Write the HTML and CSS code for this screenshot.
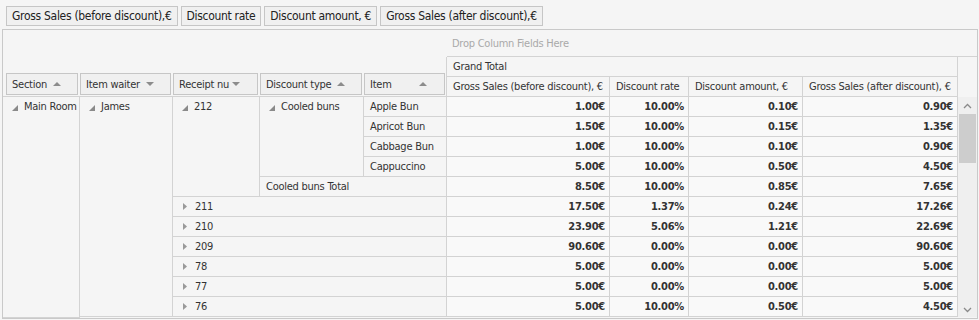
FILE: index.html
```html
<!DOCTYPE html>
<html>
<head>
<meta charset="utf-8">
<link rel="stylesheet" href="styles.css">
</head>
<body>
<div class="toolbar">
  <div class="tbtn">Gross Sales (before discount),€</div>
  <div class="tbtn">Discount rate</div>
  <div class="tbtn">Discount amount, €</div>
  <div class="tbtn">Gross Sales (after discount),€</div>
</div>
<div class="pivot">
  <div class="grid">
    <div class="fh first"><div class="fbtn"><span class="ft">Section</span><i class="up"></i></div></div>
    <div class="fh"><div class="fbtn"><span class="ft">Item waiter</span><i class="down"></i></div></div>
    <div class="fh"><div class="fbtn"><span class="ft">Receipt nu</span><i class="down tight"></i></div></div>
    <div class="fh"><div class="fbtn"><span class="ft">Discount type</span><i class="up"></i></div></div>
    <div class="fh"><div class="fbtn far"><span class="ft">Item</span><i class="up"></i></div></div>
    <div class="drop">Drop Column Fields Here</div>

    <div class="gt">Grand Total</div>
    <div class="gtx"></div>

    <div class="ch lead">Gross Sales (before discount), €</div>
    <div class="ch">Discount rate</div>
    <div class="ch">Discount amount, €</div>
    <div class="ch">Gross Sales (after discount), €</div>
    <div class="chx"></div>

    <!-- row 1 -->
    <div class="rh rs12"><span class="tg"><svg width="6" height="6" viewBox="0 0 6 6"><polygon points="6,0 6,6 0,6" fill="#8a8a8a"/></svg></span>Main Room</div>
    <div class="rh rs11"><span class="tg"><svg width="6" height="6" viewBox="0 0 6 6"><polygon points="6,0 6,6 0,6" fill="#8a8a8a"/></svg></span>James</div>
    <div class="rh rs5"><span class="tg"><svg width="6" height="6" viewBox="0 0 6 6"><polygon points="6,0 6,6 0,6" fill="#8a8a8a"/></svg></span>212</div>
    <div class="rh rs4"><span class="tg"><svg width="6" height="6" viewBox="0 0 6 6"><polygon points="6,0 6,6 0,6" fill="#8a8a8a"/></svg></span>Cooled buns</div>
    <div class="rh">Apple Bun</div>
    <div class="v">1.00€</div><div class="v">10.00%</div><div class="v">0.10€</div><div class="v">0.90€</div>
    <div class="sb">
      <div class="sb-btn"><svg width="9" height="6" viewBox="0 0 9 6"><polyline points="1,5 4.5,1.5 8,5" fill="none" stroke="#8a8a8a" stroke-width="1.3"/></svg></div>
      <div class="sb-thumb"></div>
      <div class="sb-track"></div>
      <div class="sb-btn bottom"><svg width="9" height="6" viewBox="0 0 9 6"><polyline points="1,1 4.5,4.5 8,1" fill="none" stroke="#8a8a8a" stroke-width="1.3"/></svg></div>
    </div>

    <!-- row 2 -->
    <div class="rh">Apricot Bun</div>
    <div class="v">1.50€</div><div class="v">10.00%</div><div class="v">0.15€</div><div class="v">1.35€</div>
    <!-- row 3 -->
    <div class="rh">Cabbage Bun</div>
    <div class="v">1.00€</div><div class="v">10.00%</div><div class="v">0.10€</div><div class="v">0.90€</div>
    <!-- row 4 -->
    <div class="rh">Cappuccino</div>
    <div class="v">5.00€</div><div class="v">10.00%</div><div class="v">0.50€</div><div class="v">4.50€</div>
    <!-- row 5 -->
    <div class="rh cs2">Cooled buns Total</div>
    <div class="v">8.50€</div><div class="v">10.00%</div><div class="v">0.85€</div><div class="v">7.65€</div>
    <!-- receipts -->
    <div class="rh cs3"><span class="tg col"><svg width="4" height="7" viewBox="0 0 4 7"><polygon points="0,0 4,3.5 0,7" fill="#9a9a9a"/></svg></span>211</div>
    <div class="v">17.50€</div><div class="v">1.37%</div><div class="v">0.24€</div><div class="v">17.26€</div>
    <div class="rh cs3"><span class="tg col"><svg width="4" height="7" viewBox="0 0 4 7"><polygon points="0,0 4,3.5 0,7" fill="#9a9a9a"/></svg></span>210</div>
    <div class="v">23.90€</div><div class="v">5.06%</div><div class="v">1.21€</div><div class="v">22.69€</div>
    <div class="rh cs3"><span class="tg col"><svg width="4" height="7" viewBox="0 0 4 7"><polygon points="0,0 4,3.5 0,7" fill="#9a9a9a"/></svg></span>209</div>
    <div class="v">90.60€</div><div class="v">0.00%</div><div class="v">0.00€</div><div class="v">90.60€</div>
    <div class="rh cs3"><span class="tg col"><svg width="4" height="7" viewBox="0 0 4 7"><polygon points="0,0 4,3.5 0,7" fill="#9a9a9a"/></svg></span>78</div>
    <div class="v">5.00€</div><div class="v">0.00%</div><div class="v">0.00€</div><div class="v">5.00€</div>
    <div class="rh cs3"><span class="tg col"><svg width="4" height="7" viewBox="0 0 4 7"><polygon points="0,0 4,3.5 0,7" fill="#9a9a9a"/></svg></span>77</div>
    <div class="v">5.00€</div><div class="v">0.00%</div><div class="v">0.00€</div><div class="v">5.00€</div>
    <div class="rh cs3"><span class="tg col"><svg width="4" height="7" viewBox="0 0 4 7"><polygon points="0,0 4,3.5 0,7" fill="#9a9a9a"/></svg></span>76</div>
    <div class="v">5.00€</div><div class="v">10.00%</div><div class="v">0.50€</div><div class="v">4.50€</div>
  </div>
</div>
</body>
</html>
```

FILE: styles.css
```css
* { box-sizing: border-box; }

body {
  margin: 0;
  height: 320px;
  overflow: hidden;
  background: #f5f5f5;
  font-family: "DejaVu Sans Condensed", "DejaVu Sans", sans-serif;
  font-size: 11px;
  letter-spacing: -0.25px;
  color: #333;
}

.toolbar {
  display: flex;
  gap: 3px;
  height: 29px;
  padding: 6px 0 3px 6px;
}

.tbtn {
  height: 20px;
  border: 1px solid #c6c6c6;
  background: #f0f0f0;
  padding: 0 5px;
  line-height: 18px;
  font-size: 12px;
  letter-spacing: -0.3px;
  white-space: nowrap;
  color: #222;
}

.pivot {
  margin-left: 2px;
  width: 976px;
  height: 290px;
  border: 1px solid #c9c9c9;
  background: #f5f5f5;
  overflow: hidden;
}

.grid {
  display: grid;
  grid-template-columns: 77px 93px 87px 104px 83px 163px 79px 114px 155px 19px;
  grid-template-rows: 27px 20px 20px repeat(11, 20px) 1px;
}

/* field header buttons */
.fh {
  grid-row: span 3;
  display: flex;
  align-items: flex-end;
  padding: 0 2px 1px 0;
  border-bottom: 1px solid #d3d3d3;
}
.fh.first { padding-left: 3px; }

.fbtn {
  flex: 1;
  min-width: 0;
  height: 22px;
  border: 1px solid #c6c6c6;
  background: #f0f0f0;
  display: flex;
  align-items: center;
  padding: 0 5px;
  white-space: nowrap;
}
.ft { min-width: 0; }
.fbtn i {
  flex: none;
  width: 0;
  height: 0;
  margin-left: 6px;
  border-left: 4px solid transparent;
  border-right: 4px solid transparent;
}
.fbtn i.up { border-bottom: 4px solid #8c8c8c; }
.fbtn i.down { border-top: 4px solid #8c8c8c; }
.fbtn i.tight { margin-left: 3px; }
.fbtn.far i { margin-left: auto; margin-right: 12px; }

.drop {
  grid-column: span 5;
  border-bottom: 1px solid #d3d3d3;
  color: #a9a9a9;
  padding-left: 5px;
  display: flex;
  align-items: center;
}

.gt {
  grid-column: span 4;
  border-right: 1px solid #d3d3d3;
  border-bottom: 1px solid #d3d3d3;
  box-shadow: -1px 0 0 #d3d3d3;
  padding-left: 6px;
  line-height: 19px;
}

.ch {
  border-right: 1px solid #d3d3d3;
  border-bottom: 1px solid #d3d3d3;
  padding-left: 6px;
  line-height: 19px;
  white-space: nowrap;
}
.ch.lead { box-shadow: -1px 0 0 #d3d3d3; }

.rh {
  background: #f5f5f5;
  border-right: 1px solid #d3d3d3;
  border-bottom: 1px solid #d3d3d3;
  padding-left: 6px;
  line-height: 19px;
  white-space: nowrap;
}
.rs12 { grid-row: span 12; }
.rs11 { grid-row: span 11; }
.rs5 { grid-row: span 5; }
.rs4 { grid-row: span 4; }
.cs2 { grid-column: span 2; }
.cs3 { grid-column: span 3; }

.tg {
  display: inline-block;
  width: 6px;
  margin: 0 6px 0 3px;
  vertical-align: -1px;
  line-height: 0;
}
.tg.col { width: 4px; margin: 0 8px 0 4px; vertical-align: 0; }

.v {
  background: #f9f9f9;
  border-right: 1px solid #d3d3d3;
  border-bottom: 1px solid #d3d3d3;
  text-align: right;
  padding-right: 4px;
  font-weight: bold;
  line-height: 19px;
  color: #333;
}

.sb {
  grid-row: span 11;
  background: #efefef;
  display: flex;
  flex-direction: column;
}
.sb-btn {
  height: 17px;
  display: flex;
  align-items: center;
  justify-content: center;
  flex: none;
}
.sb-btn.bottom { height: 19px; align-items: flex-end; padding-bottom: 4px; }
.sb-thumb {
  height: 49px;
  margin: 0 1px 0 1px;
  background: #cdcdcd;
  flex: none;
}
.sb-track { flex: 1; }
```
